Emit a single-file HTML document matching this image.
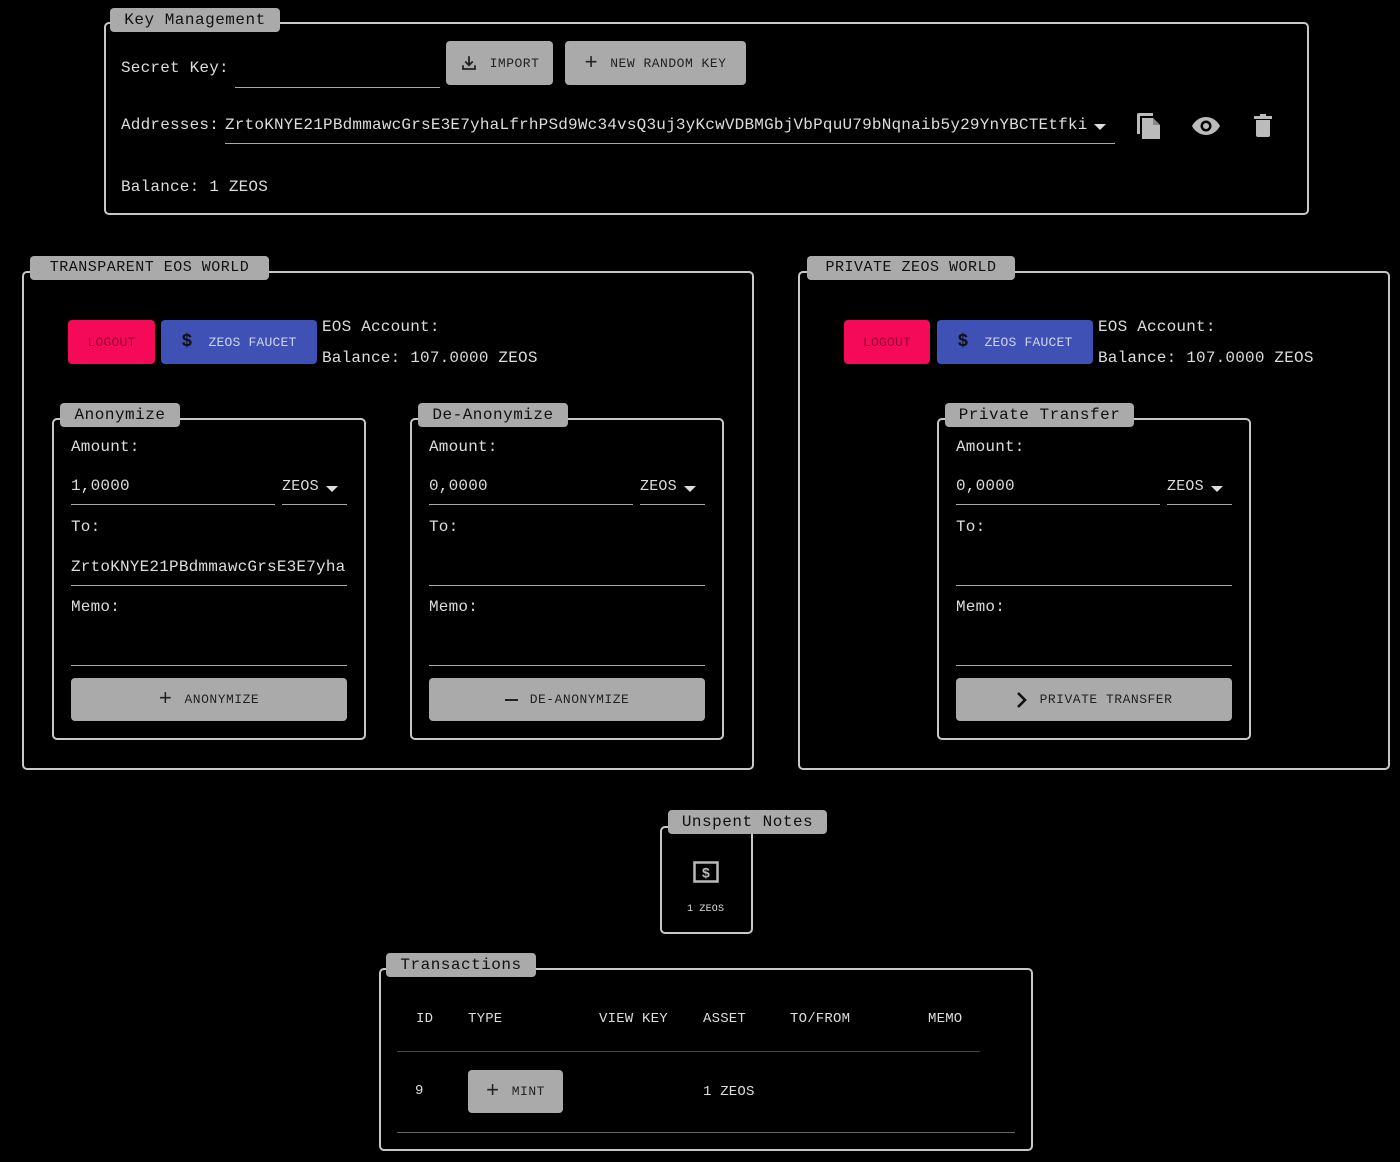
<!DOCTYPE html>
<html><head><meta charset="utf-8"><style>
*{margin:0;padding:0;box-sizing:border-box}
body{width:1400px;height:1162px;background:#000;position:relative;overflow:hidden;font-family:"Liberation Mono",monospace;color:#ddd;font-size:16px;letter-spacing:.2px}
.a{position:absolute;white-space:nowrap}
.box{position:absolute;border:2px solid #c8c8c8;border-radius:5px}
.tab{position:absolute;background:#aaa;color:#111;border-radius:4px;height:24px;line-height:24px;text-align:center;font-size:16px;letter-spacing:.5px}
.t{position:absolute;line-height:20px;white-space:nowrap;margin-top:1px}
.ul{position:absolute;height:1px;background:#aaa}
.btn{position:absolute;background:#aaa;border-radius:4px;color:#222;font-size:13px;display:flex;align-items:center;justify-content:center;gap:12px;letter-spacing:.5px}
.logout{position:absolute;background:#f50a5a;border-radius:4px;color:#9a0030;font-size:13px;display:flex;align-items:center;justify-content:center}
.fau{position:absolute;background:#3f51b5;border-radius:4px;color:#d0d4f0;font-size:13px;display:flex;align-items:center;justify-content:center;gap:16px}
.sm{font-size:14px}
.sel{font-size:15px}
</style></head><body>

<div class="box" style="left:104px;top:22px;width:1205px;height:193px"></div>
<div class="tab" style="left:110px;top:8px;width:170px">Key Management</div>
<div class="t" style="left:121px;top:57px">Secret Key:</div>
<div class="ul" style="left:235px;top:87px;width:205px"></div>
<div class="btn" style="left:446px;top:41px;width:107px;height:44px"><svg width="18" height="18" viewBox="0 0 24 24"><path d="M12 3v12M7 10l5 5 5-5M4 15v5h16v-5" stroke="#222" stroke-width="2.4" fill="none"/></svg>IMPORT</div>
<div class="btn" style="left:565px;top:41px;width:181px;height:44px"><span style="font-size:22px;font-weight:300">+</span>NEW RANDOM KEY</div>
<div class="t" style="left:121px;top:114px">Addresses:</div>
<div class="t" style="left:225px;top:114px">ZrtoKNYE21PBdmmawcGrsE3E7yhaLfrhPSd9Wc34vsQ3uj3yKcwVDBMGbjVbPquU79bNqnaib5y29YnYBCTEtfki</div>
<svg class="a" style="left:1094px;top:123px" width="12" height="8"><path d="M0 1h12L6 7z" fill="#ddd"/></svg>
<div class="ul" style="left:225px;top:143px;width:890px"></div>
<svg class="a" style="left:1136px;top:112px" width="26" height="28" viewBox="0 0 26 28"><path d="M1 3v19h3V4h13V1H3a2 2 0 0 0-2 2z" fill="#bbb"/><path d="M6 6h11l7 7v14H6z" fill="#bbb"/><path d="M17 6v7h7" fill="#888"/></svg>
<svg class="a" style="left:1191px;top:116px" width="30" height="20" viewBox="0 0 30 20"><path d="M15 1C8 1 3 6 1 10c2 4 7 9 14 9s12-5 14-9C27 6 22 1 15 1z" fill="#bbb"/><circle cx="15" cy="10" r="5.5" fill="#000"/><circle cx="15" cy="10" r="3" fill="#bbb"/></svg>
<svg class="a" style="left:1254px;top:114px" width="18" height="24" viewBox="0 0 18 24"><rect x="0" y="2" width="18" height="3" fill="#bbb"/><rect x="6" y="0" width="6" height="3" fill="#bbb"/><path d="M2 6h14v15a2 2 0 0 1-2 2H4a2 2 0 0 1-2-2z" fill="#bbb"/></svg>
<div class="t" style="left:121px;top:176px">Balance: 1 ZEOS</div>

<div class="box" style="left:22px;top:271px;width:732px;height:499px"></div>
<div class="tab" style="left:30px;top:256px;width:239px;font-size:15px">TRANSPARENT EOS WORLD</div>
<div class="logout" style="left:68px;top:320px;width:87px;height:44px">LOGOUT</div>
<div class="fau" style="left:161px;top:320px;width:156px;height:44px"><span style="font-size:18px;font-weight:bold;color:#111">$</span>ZEOS FAUCET</div>
<div class="t" style="left:322px;top:316px">EOS Account:</div>
<div class="t" style="left:322px;top:347px">Balance: 107.0000 ZEOS</div>

<div class="box" style="left:52px;top:418px;width:314px;height:322px"></div>
<div class="tab" style="left:60px;top:403px;width:120px">Anonymize</div>
<div class="t" style="left:71px;top:436px">Amount:</div>
<div class="t" style="left:71px;top:475px">1,0000</div>
<div class="ul" style="left:71px;top:504px;width:204px"></div>
<div class="t sel" style="left:282px;top:476px">ZEOS</div>
<svg class="a" style="left:326px;top:485px" width="12" height="8"><path d="M0 1h12L6 7z" fill="#ddd"/></svg>
<div class="ul" style="left:282px;top:504px;width:65px"></div>
<div class="t" style="left:71px;top:516px">To:</div>
<div class="t" style="left:71px;top:556px;width:276px;overflow:hidden">ZrtoKNYE21PBdmmawcGrsE3E7yhaL</div>
<div class="ul" style="left:71px;top:585px;width:276px"></div>
<div class="t" style="left:71px;top:596px">Memo:</div>
<div class="ul" style="left:71px;top:665px;width:276px"></div>
<div class="btn" style="left:71px;top:678px;width:276px;height:43px"><span style="font-size:22px;font-weight:300">+</span>ANONYMIZE</div>

<div class="box" style="left:410px;top:418px;width:314px;height:322px"></div>
<div class="tab" style="left:418px;top:403px;width:150px">De-Anonymize</div>
<div class="t" style="left:429px;top:436px">Amount:</div>
<div class="t" style="left:429px;top:475px">0,0000</div>
<div class="ul" style="left:429px;top:504px;width:204px"></div>
<div class="t sel" style="left:640px;top:476px">ZEOS</div>
<svg class="a" style="left:684px;top:485px" width="12" height="8"><path d="M0 1h12L6 7z" fill="#ddd"/></svg>
<div class="ul" style="left:640px;top:504px;width:65px"></div>
<div class="t" style="left:429px;top:516px">To:</div>
<div class="ul" style="left:429px;top:585px;width:276px"></div>
<div class="t" style="left:429px;top:596px">Memo:</div>
<div class="ul" style="left:429px;top:665px;width:276px"></div>
<div class="btn" style="left:429px;top:678px;width:276px;height:43px"><span style="display:inline-block;width:13px;height:2px;background:#222"></span>DE-ANONYMIZE</div>

<div class="box" style="left:798px;top:271px;width:592px;height:499px"></div>
<div class="tab" style="left:807px;top:256px;width:208px;font-size:15px">PRIVATE ZEOS WORLD</div>
<div class="logout" style="left:844px;top:320px;width:86px;height:44px">LOGOUT</div>
<div class="fau" style="left:937px;top:320px;width:156px;height:44px"><span style="font-size:18px;font-weight:bold;color:#111">$</span>ZEOS FAUCET</div>
<div class="t" style="left:1098px;top:316px">EOS Account:</div>
<div class="t" style="left:1098px;top:347px">Balance: 107.0000 ZEOS</div>

<div class="box" style="left:937px;top:418px;width:314px;height:322px"></div>
<div class="tab" style="left:945px;top:403px;width:189px">Private Transfer</div>
<div class="t" style="left:956px;top:436px">Amount:</div>
<div class="t" style="left:956px;top:475px">0,0000</div>
<div class="ul" style="left:956px;top:504px;width:204px"></div>
<div class="t sel" style="left:1167px;top:476px">ZEOS</div>
<svg class="a" style="left:1211px;top:485px" width="12" height="8"><path d="M0 1h12L6 7z" fill="#ddd"/></svg>
<div class="ul" style="left:1167px;top:504px;width:65px"></div>
<div class="t" style="left:956px;top:516px">To:</div>
<div class="ul" style="left:956px;top:585px;width:276px"></div>
<div class="t" style="left:956px;top:596px">Memo:</div>
<div class="ul" style="left:956px;top:665px;width:276px"></div>
<div class="btn" style="left:956px;top:678px;width:276px;height:43px"><svg width="12" height="18" viewBox="0 0 12 18"><path d="M2 2l7 7-7 7" stroke="#111" stroke-width="2.6" fill="none"/></svg>PRIVATE TRANSFER</div>

<div class="box" style="left:660px;top:826px;width:93px;height:108px"></div>
<div class="tab" style="left:668px;top:810px;width:159px">Unspent Notes</div>
<svg class="a" style="left:693px;top:861px" width="26" height="22" viewBox="0 0 26 22"><rect x="1.5" y="1.5" width="23" height="19" fill="none" stroke="#bbb" stroke-width="2.5"/><text x="13" y="16.5" font-family="Liberation Sans" font-weight="bold" font-size="14" fill="#bbb" text-anchor="middle">$</text></svg>
<div class="t" style="left:687px;top:899px;font-size:10px">1 ZEOS</div>

<div class="box" style="left:379px;top:968px;width:654px;height:183px"></div>
<div class="tab" style="left:386px;top:953px;width:150px">Transactions</div>
<div class="t sm" style="left:416px;top:1008px">ID</div>
<div class="t sm" style="left:468px;top:1008px">TYPE</div>
<div class="t sm" style="left:599px;top:1008px">VIEW KEY</div>
<div class="t sm" style="left:703px;top:1008px">ASSET</div>
<div class="t sm" style="left:790px;top:1008px">TO/FROM</div>
<div class="t sm" style="left:928px;top:1008px">MEMO</div>
<div class="ul" style="left:397px;top:1051px;width:583px;background:#444"></div>
<div class="t sm" style="left:415px;top:1080px">9</div>
<div class="btn" style="left:468px;top:1070px;width:95px;height:43px"><span style="font-size:22px;font-weight:300">+</span>MINT</div>
<div class="t sm" style="left:703px;top:1081px">1 ZEOS</div>
<div class="ul" style="left:397px;top:1132px;width:618px;background:#666"></div>
</body></html>
